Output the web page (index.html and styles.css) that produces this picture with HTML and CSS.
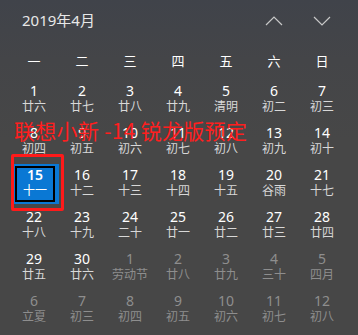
FILE: index.html
```html
<!DOCTYPE html>
<html lang="zh-CN">
<head>
<meta charset="utf-8">
<title>日历</title>
<link rel="stylesheet" href="styles.css">
</head>
<body>
<div class="cal">
  <div class="head">
    <div class="title">2019年4月</div>
    <div class="navs">
      <svg class="nav" width="18" height="10" viewBox="0 0 18 10"><polyline points="1,9 9,1 17,9" fill="none" stroke="#c8c8c8" stroke-width="1.2"/></svg>
      <svg class="nav" width="18" height="10" viewBox="0 0 18 10"><polyline points="1,1 9,9 17,1" fill="none" stroke="#c8c8c8" stroke-width="1.2"/></svg>
    </div>
  </div>
  <div class="week">
    <span>一</span><span>二</span><span>三</span><span>四</span><span>五</span><span>六</span><span>日</span>
  </div>
  <div class="grid">
    <div class="cell"><b>1</b><i>廿六</i></div>
    <div class="cell"><b>2</b><i>廿七</i></div>
    <div class="cell"><b>3</b><i>廿八</i></div>
    <div class="cell"><b>4</b><i>廿九</i></div>
    <div class="cell"><b>5</b><i>清明</i></div>
    <div class="cell"><b>6</b><i>初二</i></div>
    <div class="cell"><b>7</b><i>初三</i></div>

    <div class="cell"><b>8</b><i>初四</i></div>
    <div class="cell"><b>9</b><i>初五</i></div>
    <div class="cell"><b>10</b><i>初六</i></div>
    <div class="cell"><b>11</b><i>初七</i></div>
    <div class="cell"><b>12</b><i>初八</i></div>
    <div class="cell"><b>13</b><i>初九</i></div>
    <div class="cell"><b>14</b><i>初十</i></div>

    <div class="cell today"><div class="today-box"><b>15</b><i>十一</i></div></div>
    <div class="cell"><b>16</b><i>十二</i></div>
    <div class="cell"><b>17</b><i>十三</i></div>
    <div class="cell"><b>18</b><i>十四</i></div>
    <div class="cell"><b>19</b><i>十五</i></div>
    <div class="cell"><b>20</b><i>谷雨</i></div>
    <div class="cell"><b>21</b><i>十七</i></div>

    <div class="cell"><b>22</b><i>十八</i></div>
    <div class="cell"><b>23</b><i>十九</i></div>
    <div class="cell"><b>24</b><i>二十</i></div>
    <div class="cell"><b>25</b><i>廿一</i></div>
    <div class="cell"><b>26</b><i>廿二</i></div>
    <div class="cell"><b>27</b><i>廿三</i></div>
    <div class="cell"><b>28</b><i>廿四</i></div>

    <div class="cell"><b>29</b><i>廿五</i></div>
    <div class="cell"><b>30</b><i>廿六</i></div>
    <div class="cell dim"><b>1</b><i>劳动节</i></div>
    <div class="cell dim"><b>2</b><i>廿八</i></div>
    <div class="cell dim"><b>3</b><i>廿九</i></div>
    <div class="cell dim"><b>4</b><i>三十</i></div>
    <div class="cell dim"><b>5</b><i>四月</i></div>

    <div class="cell dim"><b>6</b><i>立夏</i></div>
    <div class="cell dim"><b>7</b><i>初三</i></div>
    <div class="cell dim"><b>8</b><i>初四</i></div>
    <div class="cell dim"><b>9</b><i>初五</i></div>
    <div class="cell dim"><b>10</b><i>初六</i></div>
    <div class="cell dim"><b>11</b><i>初七</i></div>
    <div class="cell dim"><b>12</b><i>初八</i></div>
  </div>
  <div class="promo">联想小新 -14 锐龙版预定</div>
  <div class="mark"></div>
</div>
</body>
</html>
```

FILE: styles.css
```css
html, body {
  margin: 0;
  padding: 0;
}
body {
  width: 358px;
  height: 335px;
  overflow: hidden;
  background: #474747;
  font-family: "Noto Sans", "Noto Sans CJK SC", sans-serif;
  color: #ffffff;
}
.cal {
  position: relative;
  width: 358px;
  height: 335px;
  background: linear-gradient(180deg, #40434a 0px, #444548 60px, #474747 140px, #474747 100%);
}
.head {
  height: 42px;
  display: flex;
  align-items: center;
  justify-content: space-between;
  padding: 0 27px 0 22px;
}
.title {
  font-size: 15px;
  line-height: 20px;
  color: #e8e8e8;
  margin-top: -2px;
}
.navs {
  display: flex;
  gap: 30px;
  margin-top: -1px;
}
.nav {
  display: block;
}
.week {
  height: 38px;
  display: grid;
  grid-template-columns: repeat(7, 48px);
  padding: 0 10px;
  align-items: center;
  font-family: "Noto Sans CJK SC", sans-serif;
  font-size: 13px;
  line-height: 18px;
}
.week span {
  text-align: center;
}
.grid {
  display: grid;
  grid-template-columns: repeat(7, 48px);
  grid-auto-rows: 42px;
  padding: 0 10px;
}
.cell {
  display: flex;
  flex-direction: column;
  align-items: center;
  padding-top: 3px;
}
.cell b {
  font-weight: 400;
  font-size: 14px;
  line-height: 16px;
  color: #ffffff;
}
.cell i {
  font-style: normal;
  font-family: "Noto Sans CJK SC", sans-serif;
  font-size: 12px;
  line-height: 14px;
  color: #d8d8d8;
}
.cell.dim b, .cell.dim i {
  color: #8e8e8e;
}
.cell.today {
  padding: 0 0 2px 4px;
  align-items: stretch;
}
.today-box {
  flex: 1;
  display: flex;
  flex-direction: column;
  align-items: center;
  background: #0a78d4;
  padding: 2px 4px 2px 1px;
  margin-right: -1px;
  position: relative;
}
.today-box::before {
  content: "";
  position: absolute;
  left: 1px;
  top: 2px;
  right: 4px;
  bottom: 2px;
  border: 2px solid #000;
}
.today-box b {
  margin-top: 1px;
  font-weight: 600;
}
.today-box i {
  color: #ffffff;
}
.promo {
  position: absolute;
  left: 14px;
  top: 118px;
  font-family: "Noto Sans CJK SC", sans-serif;
  font-size: 21px;
  line-height: 25px;
  font-weight: 400;
  letter-spacing: 0.3px;
  color: #ff1e1e;
  white-space: pre;
}
.mark {
  position: absolute;
  left: 11px;
  top: 154px;
  width: 53px;
  height: 57px;
  box-sizing: border-box;
  border: 3px solid #ff1a1a;
  border-radius: 2px;
}
```
